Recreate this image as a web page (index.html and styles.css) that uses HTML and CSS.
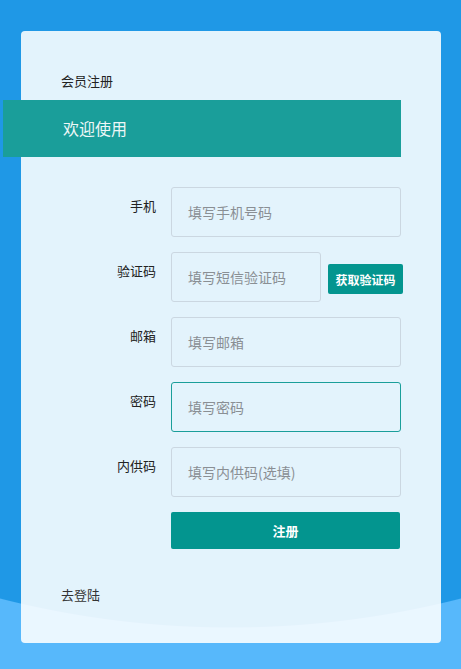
FILE: index.html
```html
<!DOCTYPE html>
<html lang="zh-CN">
<head>
    <meta charset="UTF-8">
    <meta name="viewport" content="width=device-width, initial-scale=1.0">
    <title>会员注册</title>
    <link rel="stylesheet" href="styles.css">
</head>
<body>

<div class="card">
  <p class="card__title">会员注册</p>

  <div class="banner">欢迎使用</div>

  <form class="reg-form">
    <div class="field">
      <label class="field__label" for="phone">手机</label>
      <div class="field__control">
        <input class="input" id="phone" type="text" placeholder="填写手机号码">
      </div>
    </div>

    <div class="field">
      <label class="field__label" for="sms">验证码</label>
      <div class="field__control">
        <input class="input input--short" id="sms" type="text" placeholder="填写短信验证码">
        <button class="btn btn--code" type="button">获取验证码</button>
      </div>
    </div>

    <div class="field">
      <label class="field__label" for="email">邮箱</label>
      <div class="field__control">
        <input class="input" id="email" type="text" placeholder="填写邮箱">
      </div>
    </div>

    <div class="field">
      <label class="field__label" for="pwd">密码</label>
      <div class="field__control">
        <input class="input input--active" id="pwd" type="password" placeholder="填写密码" autofocus>
      </div>
    </div>

    <div class="field">
      <label class="field__label" for="invite">内供码</label>
      <div class="field__control">
        <input class="input" id="invite" type="text" placeholder="填写内供码(选填)">
      </div>
    </div>

    <div class="field">
      <span class="field__label"></span>
      <div class="field__control">
        <button class="btn btn--submit" type="submit">注册</button>
      </div>
    </div>
  </form>

  <a class="card__link" href="#">去登陆</a>
</div>

</body>
</html>
```

FILE: styles.css
```css
:root {
  --clr-bg-dark: #1f98e6;
  --clr-bg-light: #57b8fb;
  --clr-teal: #1a9e9a;
  --clr-teal-btn: #03958f;
  --clr-text: #222;
  --clr-border: #cbd7e1;
}

* {
  box-sizing: border-box;
}

body {
  margin: 0;
  min-height: 100vh;
  padding: 31px 20px 0 21px;
  font-family: "Noto Sans CJK SC", "Noto Sans", sans-serif;
  color: var(--clr-text);
  background: radial-gradient(circle 930px at 50% -303px, var(--clr-bg-dark) 930px, var(--clr-bg-light) 931px);
}

.card {
  width: 420px;
  padding: 40px 40px 38px;
  background: rgba(255, 255, 255, 0.88);
  border-radius: 4px;
}

.card__title {
  margin: 0;
  font-size: 13px;
  line-height: 20px;
}

.banner {
  margin: 9px 0 30px -58px;
  padding-left: 60px;
  height: 57px;
  line-height: 57px;
  font-size: 16px;
  color: #eef7f7;
  background: var(--clr-teal);
}

.reg-form {
  display: flex;
  flex-direction: column;
  gap: 15px;
}

.field {
  display: flex;
  gap: 15px;
}

.field__label {
  flex: 0 0 95px;
  padding-top: 9px;
  font-size: 13px;
  line-height: 20px;
  text-align: right;
}

.field__control {
  display: flex;
  align-items: center;
  gap: 7px;
  width: 230px;
}

.input {
  width: 230px;
  height: 50px;
  padding: 0 16px;
  font: inherit;
  font-size: 14px;
  color: var(--clr-text);
  background: transparent;
  border: 1px solid var(--clr-border);
  border-radius: 3px;
  outline: none;
}

.input::placeholder {
  color: #8a8f94;
}

.input--short {
  width: 150px;
  flex: 0 0 150px;
}

.input--active,
.input:focus {
  border-color: var(--clr-teal);
}

.btn {
  font: inherit;
  color: #fff;
  background: var(--clr-teal-btn);
  border: 0;
  border-radius: 2px;
  cursor: pointer;
}

.btn--code {
  flex: 0 0 75px;
  height: 30px;
  margin-top: 4px;
  padding: 0;
  font-size: 12px;
  font-weight: 700;
}

.btn--submit {
  width: 229px;
  height: 37px;
  font-size: 13px;
  font-weight: 700;
}

.card__link {
  display: block;
  margin-top: 36px;
  font-size: 13px;
  line-height: 20px;
  color: #333;
  text-decoration: none;
}
```
